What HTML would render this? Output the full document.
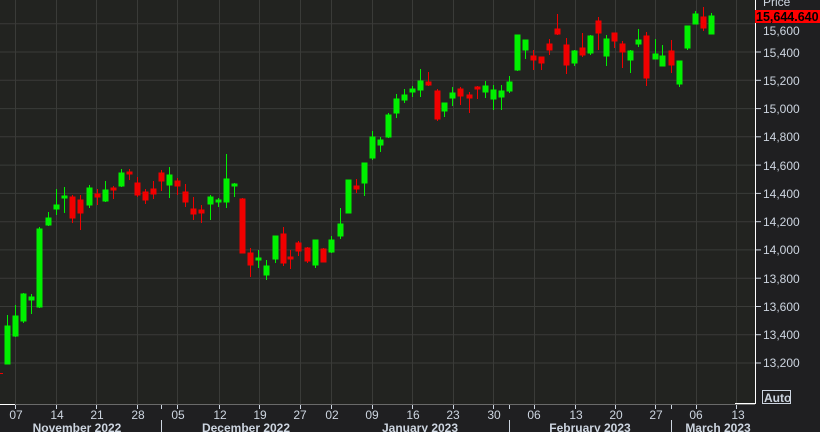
<!DOCTYPE html>
<html><head><meta charset="utf-8"><style>
html,body{margin:0;padding:0;background:#1f1f21;width:820px;height:432px;overflow:hidden}
svg{display:block}
text{font-family:"Liberation Sans",sans-serif;fill:#cdd5e0;font-size:12px}
</style></head><body>
<svg width="820" height="432" xmlns="http://www.w3.org/2000/svg">
<rect x="0" y="0" width="820" height="432" fill="#1f1f21"/>
<rect x="0" y="0" width="755" height="404" fill="#222320"/>
<g stroke="#3a3b38" stroke-width="1">
<line x1="0" x2="755" y1="23.8" y2="23.8"/><line x1="0" x2="755" y1="52" y2="52"/><line x1="0" x2="755" y1="80.3" y2="80.3"/><line x1="0" x2="755" y1="108.6" y2="108.6"/><line x1="0" x2="755" y1="136.8" y2="136.8"/><line x1="0" x2="755" y1="165.1" y2="165.1"/><line x1="0" x2="755" y1="193.4" y2="193.4"/><line x1="0" x2="755" y1="221.7" y2="221.7"/><line x1="0" x2="755" y1="249.9" y2="249.9"/><line x1="0" x2="755" y1="278.2" y2="278.2"/><line x1="0" x2="755" y1="306.5" y2="306.5"/><line x1="0" x2="755" y1="334.7" y2="334.7"/><line x1="0" x2="755" y1="363" y2="363"/>
<line y1="0" y2="404" x1="15.5" x2="15.5"/><line y1="0" y2="404" x1="56.5" x2="56.5"/><line y1="0" y2="404" x1="96.5" x2="96.5"/><line y1="0" y2="404" x1="137.5" x2="137.5"/><line y1="0" y2="404" x1="177.5" x2="177.5"/><line y1="0" y2="404" x1="219.5" x2="219.5"/><line y1="0" y2="404" x1="259.5" x2="259.5"/><line y1="0" y2="404" x1="300.5" x2="300.5"/><line y1="0" y2="404" x1="331.5" x2="331.5"/><line y1="0" y2="404" x1="372.5" x2="372.5"/><line y1="0" y2="404" x1="412.5" x2="412.5"/><line y1="0" y2="404" x1="453.5" x2="453.5"/><line y1="0" y2="404" x1="493.5" x2="493.5"/><line y1="0" y2="404" x1="534.5" x2="534.5"/><line y1="0" y2="404" x1="575.5" x2="575.5"/><line y1="0" y2="404" x1="615.5" x2="615.5"/><line y1="0" y2="404" x1="655.5" x2="655.5"/><line y1="0" y2="404" x1="696.5" x2="696.5"/><line y1="0" y2="404" x1="736.5" x2="736.5"/>
</g>
<!-- green candles -->
<g stroke="#00f000" fill="#00f000" stroke-width="1">
<line x1="7.5" x2="7.5" y1="315" y2="364"/><rect x="5" y="326" width="5" height="38"/>
<line x1="15.5" x2="15.5" y1="305" y2="337"/><rect x="13" y="316" width="5" height="20"/>
<line x1="23.5" x2="23.5" y1="293" y2="323"/><rect x="21" y="294" width="5" height="27"/>
<line x1="31.5" x2="31.5" y1="294" y2="314"/><rect x="29" y="297" width="5" height="3"/>
<line x1="39.5" x2="39.5" y1="227" y2="308"/><rect x="37" y="229" width="5" height="78"/>
<line x1="48.5" x2="48.5" y1="212" y2="226"/><rect x="46" y="218" width="5" height="7"/>
<line x1="56.5" x2="56.5" y1="189" y2="215"/><rect x="54" y="205" width="5" height="4"/>
<line x1="64.5" x2="64.5" y1="187" y2="213"/><rect x="62" y="196" width="5" height="2"/>
<line x1="89.5" x2="89.5" y1="185" y2="208"/><rect x="87" y="188" width="5" height="17"/>
<line x1="105.5" x2="105.5" y1="181" y2="202"/><rect x="103" y="190" width="5" height="11"/>
<line x1="121.5" x2="121.5" y1="169" y2="187"/><rect x="119" y="173" width="5" height="13"/>
<line x1="169.5" x2="169.5" y1="167" y2="198"/><rect x="167" y="175" width="5" height="10"/>
<line x1="210.5" x2="210.5" y1="195" y2="220"/><rect x="208" y="197" width="5" height="7"/>
<line x1="218.5" x2="218.5" y1="198" y2="207"/><rect x="216" y="200" width="5" height="2"/>
<line x1="226.5" x2="226.5" y1="154" y2="208"/><rect x="224" y="179" width="5" height="23"/>
<line x1="234.5" x2="234.5" y1="183" y2="197"/><rect x="232" y="184" width="5" height="2"/>
<line x1="258.5" x2="258.5" y1="250" y2="268"/><rect x="256" y="258" width="5" height="2"/>
<line x1="266.5" x2="266.5" y1="260" y2="280"/><rect x="264" y="266" width="5" height="9"/>
<line x1="275.5" x2="275.5" y1="236" y2="263"/><rect x="273" y="236" width="5" height="23"/>
<line x1="315.5" x2="315.5" y1="240" y2="268"/><rect x="313" y="240" width="5" height="25"/>
<line x1="331.5" x2="331.5" y1="236" y2="253"/><rect x="329" y="240" width="5" height="12"/>
<line x1="340.5" x2="340.5" y1="208" y2="239"/><rect x="338" y="224" width="5" height="12"/>
<line x1="348.5" x2="348.5" y1="180" y2="213"/><rect x="346" y="180" width="5" height="33"/>
<line x1="364.5" x2="364.5" y1="163" y2="196"/><rect x="362" y="163" width="5" height="20"/>
<line x1="372.5" x2="372.5" y1="131" y2="160"/><rect x="370" y="137" width="5" height="21"/>
<line x1="380.5" x2="380.5" y1="137" y2="152"/><rect x="378" y="140" width="5" height="5"/>
<line x1="388.5" x2="388.5" y1="113" y2="138"/><rect x="386" y="115" width="5" height="22"/>
<line x1="396.5" x2="396.5" y1="94" y2="118"/><rect x="394" y="99" width="5" height="14"/>
<line x1="404.5" x2="404.5" y1="89" y2="103"/><rect x="402" y="95" width="5" height="5"/>
<line x1="412.5" x2="412.5" y1="86" y2="97"/><rect x="410" y="89" width="5" height="3"/>
<line x1="420.5" x2="420.5" y1="69" y2="97"/><rect x="418" y="81" width="5" height="9"/>
<line x1="444.5" x2="444.5" y1="103" y2="117"/><rect x="442" y="103" width="5" height="8"/>
<line x1="452.5" x2="452.5" y1="87" y2="106"/><rect x="450" y="93" width="5" height="5"/>
<line x1="485.5" x2="485.5" y1="81" y2="98"/><rect x="483" y="86" width="5" height="6"/>
<line x1="493.5" x2="493.5" y1="85" y2="110"/><rect x="491" y="90" width="5" height="9"/>
<line x1="501.5" x2="501.5" y1="85" y2="110"/><rect x="499" y="91" width="5" height="6"/>
<line x1="509.5" x2="509.5" y1="76" y2="93"/><rect x="507" y="82" width="5" height="9"/>
<line x1="517.5" x2="517.5" y1="35" y2="71"/><rect x="515" y="35" width="5" height="35"/>
<line x1="525.5" x2="525.5" y1="40" y2="59"/><rect x="523" y="40" width="5" height="10"/>
<line x1="574.5" x2="574.5" y1="50" y2="66"/><rect x="572" y="51" width="5" height="12"/>
<line x1="590.5" x2="590.5" y1="35" y2="55"/><rect x="588" y="36" width="5" height="17"/>
<line x1="606.5" x2="606.5" y1="35" y2="66"/><rect x="604" y="39" width="5" height="17"/>
<line x1="630.5" x2="630.5" y1="50" y2="73"/><rect x="628" y="51" width="5" height="9"/>
<line x1="638.5" x2="638.5" y1="29" y2="47"/><rect x="636" y="40" width="5" height="4"/>
<line x1="655.5" x2="655.5" y1="39" y2="59"/><rect x="653" y="54" width="5" height="5"/>
<line x1="662.5" x2="662.5" y1="45" y2="66"/><rect x="660" y="56" width="5" height="10"/>
<line x1="679.5" x2="679.5" y1="61" y2="87"/><rect x="677" y="61" width="5" height="23"/>
<line x1="687.5" x2="687.5" y1="26" y2="50"/><rect x="685" y="26" width="5" height="22"/>
<line x1="695.5" x2="695.5" y1="11" y2="24"/><rect x="693" y="14" width="5" height="10"/>
<line x1="711.5" x2="711.5" y1="13" y2="34"/><rect x="709" y="16" width="5" height="18"/>
</g>
<!-- red candles -->
<g stroke="#f00000" fill="#f00000" stroke-width="1">
<line x1="0" x2="3" y1="373.5" y2="373.5"/>
<line x1="72.5" x2="72.5" y1="195" y2="223"/><rect x="70" y="197" width="5" height="21"/>
<line x1="80.5" x2="80.5" y1="195" y2="230"/><rect x="78" y="200" width="5" height="13"/>
<line x1="97.5" x2="97.5" y1="189" y2="205"/><rect x="95" y="194" width="5" height="3"/>
<line x1="113.5" x2="113.5" y1="186" y2="199"/><rect x="111" y="188" width="5" height="2"/>
<line x1="129.5" x2="129.5" y1="169" y2="180"/><rect x="127" y="172" width="5" height="2"/>
<line x1="137.5" x2="137.5" y1="177" y2="197"/><rect x="135" y="183" width="5" height="12"/>
<line x1="145.5" x2="145.5" y1="189" y2="204"/><rect x="143" y="192" width="5" height="8"/>
<line x1="153.5" x2="153.5" y1="181" y2="199"/><rect x="151" y="189" width="5" height="5"/>
<line x1="161.5" x2="161.5" y1="170" y2="191"/><rect x="159" y="173" width="5" height="8"/>
<line x1="177.5" x2="177.5" y1="178" y2="195"/><rect x="175" y="181" width="5" height="5"/>
<line x1="185.5" x2="185.5" y1="184" y2="207"/><rect x="183" y="192" width="5" height="10"/>
<line x1="193.5" x2="193.5" y1="197" y2="220"/><rect x="191" y="209" width="5" height="5"/>
<line x1="201.5" x2="201.5" y1="205" y2="223"/><rect x="199" y="210" width="5" height="3"/>
<line x1="242.5" x2="242.5" y1="198" y2="253"/><rect x="240" y="199" width="5" height="54"/>
<line x1="250.5" x2="250.5" y1="248" y2="277"/><rect x="248" y="253" width="5" height="12"/>
<line x1="283.5" x2="283.5" y1="227" y2="266"/><rect x="281" y="234" width="5" height="29"/>
<line x1="290.5" x2="290.5" y1="250" y2="269"/><rect x="288" y="257" width="5" height="2"/>
<line x1="298.5" x2="298.5" y1="241" y2="256"/><rect x="296" y="243" width="5" height="8"/>
<line x1="307.5" x2="307.5" y1="247" y2="263"/><rect x="305" y="248" width="5" height="13"/>
<line x1="323.5" x2="323.5" y1="248" y2="262"/><rect x="321" y="249" width="5" height="13"/>
<line x1="356.5" x2="356.5" y1="179" y2="193"/><rect x="354" y="186" width="5" height="3"/>
<line x1="428.5" x2="428.5" y1="72" y2="86"/><rect x="426" y="82" width="5" height="3"/>
<line x1="437.5" x2="437.5" y1="89" y2="121"/><rect x="435" y="91" width="5" height="28"/>
<line x1="460.5" x2="460.5" y1="87" y2="105"/><rect x="458" y="89" width="5" height="7"/>
<line x1="469.5" x2="469.5" y1="92" y2="113"/><rect x="467" y="95" width="5" height="3"/>
<line x1="477.5" x2="477.5" y1="86" y2="99"/><rect x="475" y="87" width="5" height="2"/>
<line x1="533.5" x2="533.5" y1="50" y2="70"/><rect x="531" y="56" width="5" height="4"/>
<line x1="541.5" x2="541.5" y1="57" y2="70"/><rect x="539" y="57" width="5" height="6"/>
<line x1="549.5" x2="549.5" y1="39" y2="55"/><rect x="547" y="44" width="5" height="6"/>
<line x1="557.5" x2="557.5" y1="14" y2="35"/><rect x="555" y="29" width="5" height="5"/>
<line x1="566.5" x2="566.5" y1="38" y2="74"/><rect x="564" y="45" width="5" height="20"/>
<line x1="582.5" x2="582.5" y1="33" y2="57"/><rect x="580" y="48" width="5" height="7"/>
<line x1="598.5" x2="598.5" y1="17" y2="50"/><rect x="596" y="21" width="5" height="12"/>
<line x1="614.5" x2="614.5" y1="33" y2="48"/><rect x="612" y="33" width="5" height="8"/>
<line x1="622.5" x2="622.5" y1="41" y2="68"/><rect x="620" y="44" width="5" height="8"/>
<line x1="646.5" x2="646.5" y1="32" y2="86"/><rect x="644" y="36" width="5" height="42"/>
<line x1="671.5" x2="671.5" y1="40" y2="73"/><rect x="669" y="51" width="5" height="14"/>
<line x1="703.5" x2="703.5" y1="7" y2="31"/><rect x="701" y="17" width="5" height="11"/>
</g>
<!-- axes -->
<line x1="0" x2="755" y1="404.5" y2="404.5" stroke="#6a6a6a"/>
<line x1="0" x2="15" y1="404.5" y2="404.5" stroke="#ffffff"/>
<line x1="735" x2="756" y1="403.5" y2="403.5" stroke="#ffffff"/>
<line x1="755.5" x2="755.5" y1="0" y2="404" stroke="#ffffff"/>
<g stroke="#cdd5e0">
<line x1="756" x2="761" y1="52" y2="52"/><line x1="756" x2="761" y1="80.3" y2="80.3"/><line x1="756" x2="761" y1="108.6" y2="108.6"/><line x1="756" x2="761" y1="136.8" y2="136.8"/><line x1="756" x2="761" y1="165.1" y2="165.1"/><line x1="756" x2="761" y1="193.4" y2="193.4"/><line x1="756" x2="761" y1="221.7" y2="221.7"/><line x1="756" x2="761" y1="249.9" y2="249.9"/><line x1="756" x2="761" y1="278.2" y2="278.2"/><line x1="756" x2="761" y1="306.5" y2="306.5"/><line x1="756" x2="761" y1="334.7" y2="334.7"/><line x1="756" x2="761" y1="363" y2="363"/>
<line x1="15.5" x2="15.5" y1="405" y2="409"/><line x1="56.5" x2="56.5" y1="405" y2="409"/><line x1="96.5" x2="96.5" y1="405" y2="409"/><line x1="137.5" x2="137.5" y1="405" y2="409"/><line x1="177.5" x2="177.5" y1="405" y2="409"/><line x1="219.5" x2="219.5" y1="405" y2="409"/><line x1="259.5" x2="259.5" y1="405" y2="409"/><line x1="300.5" x2="300.5" y1="405" y2="409"/><line x1="331.5" x2="331.5" y1="405" y2="409"/><line x1="372.5" x2="372.5" y1="405" y2="409"/><line x1="412.5" x2="412.5" y1="405" y2="409"/><line x1="453.5" x2="453.5" y1="405" y2="409"/><line x1="493.5" x2="493.5" y1="405" y2="409"/><line x1="534.5" x2="534.5" y1="405" y2="409"/><line x1="575.5" x2="575.5" y1="405" y2="409"/><line x1="615.5" x2="615.5" y1="405" y2="409"/><line x1="655.5" x2="655.5" y1="405" y2="409"/><line x1="696.5" x2="696.5" y1="405" y2="409"/><line x1="736.5" x2="736.5" y1="405" y2="409"/>
<line x1="161.5" x2="161.5" y1="405" y2="409"/><line x1="161.5" x2="161.5" y1="420" y2="432"/>
<line x1="509.5" x2="509.5" y1="405" y2="409"/><line x1="509.5" x2="509.5" y1="420" y2="432"/>
<line x1="671.5" x2="671.5" y1="405" y2="409"/><line x1="671.5" x2="671.5" y1="420" y2="432"/>
</g>
<g>
<text x="763" y="6">Price</text>
<text x="763" y="35">15,600</text><text x="763" y="57">15,400</text><text x="763" y="85">15,200</text><text x="763" y="113">15,000</text><text x="763" y="141">14,800</text><text x="763" y="170">14,600</text><text x="763" y="198">14,400</text><text x="763" y="226">14,200</text><text x="763" y="254">14,000</text><text x="763" y="283">13,800</text><text x="763" y="311">13,600</text><text x="763" y="339">13,400</text><text x="763" y="367">13,200</text>
</g>
<rect x="755" y="10" width="65" height="13" fill="#ff0000"/>
<text x="756" y="21" style="fill:#000;font-weight:bold;font-size:12.5px">15,644.640</text>
<rect x="762.5" y="390.5" width="28" height="13" fill="none" stroke="#cdd5e0"/>
<text x="764" y="402" style="font-weight:bold">Auto</text>
<g text-anchor="middle">
<text x="16" y="419">07</text><text x="57" y="419">14</text><text x="97" y="419">21</text><text x="138" y="419">28</text><text x="178" y="419">05</text><text x="220" y="419">12</text><text x="260" y="419">19</text><text x="300" y="419">27</text><text x="332" y="419">02</text><text x="372" y="419">09</text><text x="413" y="419">16</text><text x="453" y="419">23</text><text x="494" y="419">30</text><text x="534" y="419">06</text><text x="576" y="419">13</text><text x="616" y="419">20</text><text x="656" y="419">27</text><text x="696" y="419">06</text><text x="738" y="419">13</text>
</g>
<g text-anchor="middle" style="font-weight:bold">
<text x="77" y="432" style="font-weight:bold">November 2022</text>
<text x="246" y="432" style="font-weight:bold">December 2022</text>
<text x="420" y="432" style="font-weight:bold">January 2023</text>
<text x="590" y="432" style="font-weight:bold">February 2023</text>
<text x="718" y="432" style="font-weight:bold">March 2023</text>
</g>
</svg>
</body></html>
